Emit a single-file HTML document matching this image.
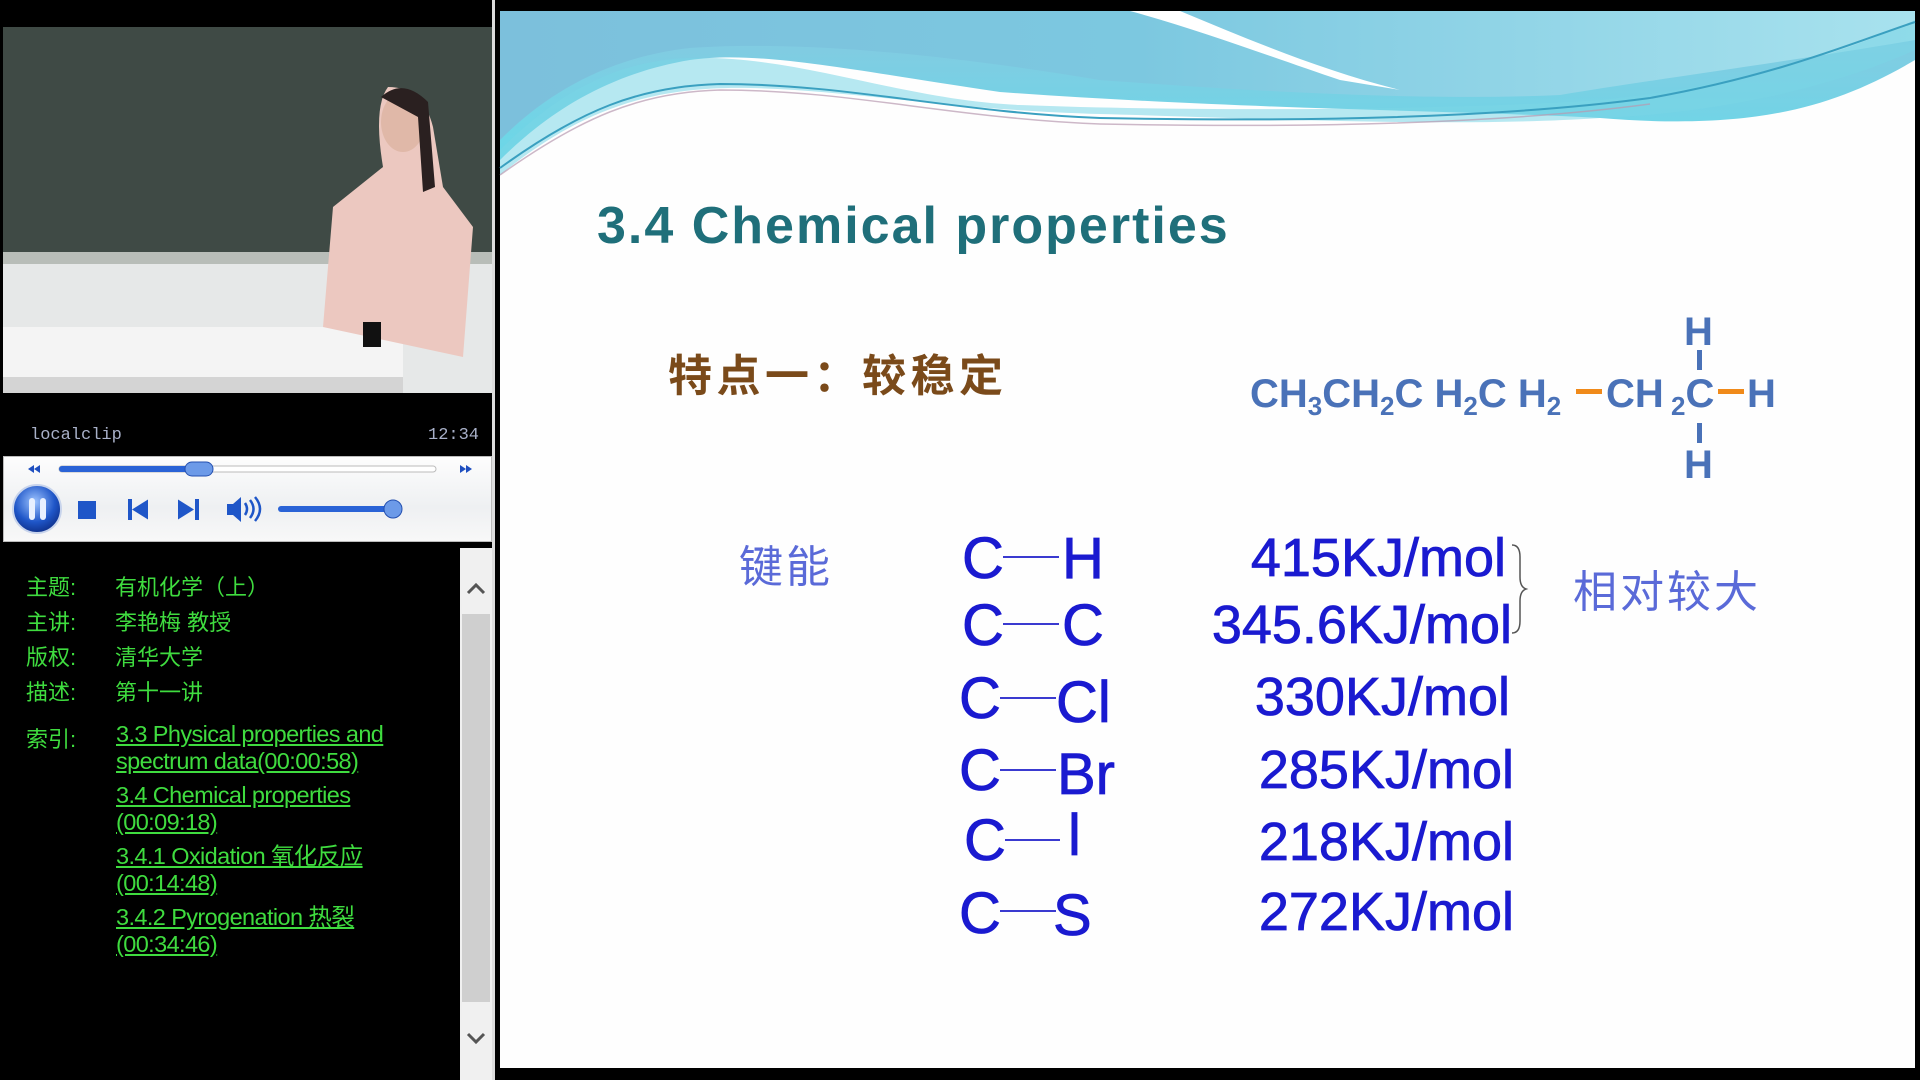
<!DOCTYPE html>
<html><head><meta charset="utf-8"><style>
*{margin:0;padding:0;box-sizing:border-box}
body{width:1920px;height:1080px;background:#000;position:relative;overflow:hidden;font-family:"Liberation Sans","Noto Sans CJK SC",sans-serif}
.abs{position:absolute}
.info{color:#3fdc3f;font-size:22px;font-family:"Liberation Sans","Noto Sans CJK SC",sans-serif}
.lnk{color:#3fdc3f;text-decoration:underline;font-size:23.5px;line-height:27px;letter-spacing:-0.6px;white-space:nowrap}
</style></head><body>
<!-- video -->
<svg class="abs" style="left:3px;top:27px" width="489" height="366" viewBox="0 0 489 366">
<rect width="489" height="366" fill="#3f4a45"/>
<rect y="225" width="489" height="12" fill="#b8bdb8"/>
<rect y="237" width="489" height="129" fill="#e6e8e8"/>
<rect y="300" width="400" height="50" fill="#f4f4f4"/>
<rect y="350" width="400" height="16" fill="#d4d4d4"/>
<path d="M385 60 Q370 80 380 140 L330 180 L320 300 L460 330 L470 200 L440 160 L430 100 Q420 60 385 60Z" fill="#ecc8c0"/>
<ellipse cx="400" cy="95" rx="22" ry="30" fill="#e0b8a8"/>
<path d="M378 70 Q400 50 425 75 L432 160 L420 165 L415 90 Z" fill="#2a2020"/>
<rect x="360" y="295" width="18" height="25" fill="#111"/>
</svg>
<!-- player -->
<div class="abs" style="left:30px;top:426px;color:#a8b0c8;font-family:'Liberation Mono',monospace;font-size:17px">localclip</div>
<div class="abs" style="left:428px;top:426px;color:#a8b0c8;font-family:'Liberation Mono',monospace;font-size:17px">12:34</div>
<div class="abs" style="left:3px;top:456px;width:489px;height:86px;background:linear-gradient(#fdfdfd,#eef0f2 60%,#f8f8f8);border:1px solid #bbb"></div>
<svg class="abs" style="left:0;top:456px" width="492" height="86">
<defs><radialGradient id="pb" cx="0.45" cy="0.35" r="0.7"><stop offset="0" stop-color="#9ec4ff"/><stop offset="0.6" stop-color="#1f56c8"/><stop offset="1" stop-color="#0c2a80"/></radialGradient></defs>
<path d="M28 13 l6 -4 v8z M34 13 l6 -4 v8z" fill="#1e4fc0"/>
<path d="M460 9 l6 4 -6 4z M466 9 l6 4 -6 4z" fill="#1e4fc0"/>
<rect x="59" y="10" width="377" height="6" rx="3" fill="#fff" stroke="#bbb"/>
<rect x="59" y="10" width="140" height="6" rx="3" fill="#2a63d6"/>
<rect x="185" y="6" width="28" height="14" rx="7" fill="#6c9ae8" stroke="#2450b0"/>
<circle cx="37" cy="53" r="24" fill="url(#pb)" stroke="#c8d4ec" stroke-width="2"/>
<rect x="29" y="42" width="6" height="22" rx="3" fill="#e8f0ff"/><rect x="40" y="42" width="6" height="22" rx="3" fill="#e8f0ff"/>
<rect x="78" y="45" width="18" height="18" fill="#1f56c8"/>
<rect x="128" y="43" width="4" height="21" fill="#1f56c8"/><path d="M132 53.5 l16 -10 v20z" fill="#1f56c8"/>
<path d="M178 43.5 l16 10 -16 10z" fill="#1f56c8"/><rect x="195" y="43" width="4" height="21" fill="#1f56c8"/>
<path d="M227 48 h6 l8 -7 v25 l-8 -7 h-6z" fill="#1f56c8"/>
<path d="M245 47 q4 6 0 12 M250 44 q7 9 0 18 M255 41 q10 12 0 24" stroke="#1f56c8" stroke-width="2.5" fill="none"/>
<rect x="278" y="50" width="116" height="6" rx="3" fill="#2a63d6"/>
<circle cx="393" cy="53" r="9" fill="#6c9ae8" stroke="#2450b0"/>
</svg>
<!-- info panel -->
<div class="abs" style="left:0;top:548px;width:460px;height:532px;background:#000"></div>
<div class="abs info" style="left:26px;top:570px;line-height:35px">主题:<br>主讲:<br>版权:<br>描述:</div>
<div class="abs info" style="left:115px;top:570px;line-height:35px">有机化学（上）<br>李艳梅 教授<br>清华大学<br>第十一讲</div>
<div class="abs info" style="left:26px;top:722px">索引:</div>
<div class="abs lnk" style="left:116px;top:721px">3.3 Physical properties and<br>spectrum data(00:00:58)</div>
<div class="abs lnk" style="left:116px;top:782px">3.4 Chemical properties<br>(00:09:18)</div>
<div class="abs lnk" style="left:116px;top:843px">3.4.1 Oxidation 氧化反应<br>(00:14:48)</div>
<div class="abs lnk" style="left:116px;top:904px">3.4.2 Pyrogenation 热裂<br>(00:34:46)</div>
<div class="abs" style="left:460px;top:548px;width:32px;height:532px;background:#f0f0f0"></div>
<div class="abs" style="left:462px;top:614px;width:28px;height:388px;background:#cfcfcf"></div>
<svg class="abs" style="left:460px;top:548px" width="32" height="532"><path d="M8 45 l8 -8 8 8" stroke="#555" stroke-width="3" fill="none"/><path d="M8 486 l8 8 8 -8" stroke="#555" stroke-width="3" fill="none"/></svg>
<div class="abs" style="left:492px;top:0;width:3px;height:1080px;background:#ddd"></div>
<!-- slide -->
<svg class="abs" style="left:0;top:0" width="1920" height="1080" viewBox="0 0 1920 1080">
<defs>
<linearGradient id="bl" x1="0" y1="0" x2="1" y2="0"><stop offset="0" stop-color="#7cc0dc"/><stop offset="0.45" stop-color="#7cc8e0"/><stop offset="1" stop-color="#a8e2ee"/></linearGradient>
<linearGradient id="cy" x1="0" y1="0" x2="0" y2="1"><stop offset="0" stop-color="#88c8e0"/><stop offset="1" stop-color="#6ad8e8"/></linearGradient>
</defs>
<rect x="500" y="11" width="1415" height="1057" fill="#fefefe"/>
<path d="M500 11 H1915 V60 C1830 110 1750 130 1600 118 C1450 110 1250 110 1000 92 C850 70 760 50 690 60 C600 75 540 120 500 160 Z" fill="url(#cy)"/>
<path d="M500 11 H1915 V40 C1800 60 1650 80 1560 95 C1450 100 1300 95 1100 80 C950 55 800 40 690 48 C600 58 540 100 500 140 Z" fill="url(#bl)"/>
<path d="M1130 11 C1200 30 1280 60 1340 80 L1400 90 C1320 70 1250 40 1180 11Z" fill="#fff"/>
<path d="M500 150 C560 90 620 60 690 58 C800 55 900 100 1020 105 C1200 112 1450 110 1600 100 C1750 85 1850 50 1915 20 V50 C1850 80 1740 112 1600 118 C1450 128 1250 118 1100 114 C950 110 850 90 750 88 C650 86 580 110 500 175Z" fill="#7ad6e6" opacity="0.55"/>
<path d="M500 168 C580 110 640 86 720 84 C850 84 950 112 1100 118 C1300 122 1500 118 1650 98 C1780 75 1860 40 1915 22" stroke="#3aa0c0" stroke-width="2" fill="none"/>
<path d="M500 175 C580 118 640 92 720 90 C850 90 950 118 1100 124 C1300 128 1500 124 1650 104" stroke="#b89ab0" stroke-width="1.5" fill="none" opacity="0.7"/>
<text x="597" y="243" font-family="Liberation Sans" font-weight="bold" font-size="52" letter-spacing="2" fill="#1f6f7a">3.4  Chemical properties</text>
<text x="668" y="391" font-family="Liberation Sans,Noto Sans CJK SC,sans-serif" font-weight="bold" font-size="44" letter-spacing="4.5" fill="#7a4a1a">特点一：较稳定</text>
<g font-family="Liberation Sans" font-weight="bold" font-size="40" fill="#4a72b8">
<text x="1250" y="407">CH<tspan font-size="26" dy="8">3</tspan><tspan dy="-8">CH</tspan><tspan font-size="26" dy="8">2</tspan><tspan dy="-8">C H</tspan><tspan font-size="26" dy="8">2</tspan><tspan dy="-8">C H</tspan><tspan font-size="26" dy="8">2</tspan></text>
<text x="1606" y="407">CH<tspan font-size="26" dy="8"> 2</tspan><tspan dy="-8">C</tspan></text>
<text x="1747" y="407">H</text>
<text x="1684" y="345">H</text>
<text x="1684" y="478">H</text>
</g>
<rect x="1576" y="389" width="26" height="5" fill="#f08a1a"/>
<rect x="1718" y="389" width="26" height="5" fill="#f08a1a"/>
<rect x="1697" y="350" width="5" height="20" fill="#4a72b8"/>
<rect x="1697" y="423" width="5" height="20" fill="#4a72b8"/>
<text x="739" y="582" font-family="Liberation Sans,Noto Sans CJK SC,sans-serif" font-size="44" letter-spacing="3" fill="#5a6ad8">键能</text>
<g font-family="Liberation Sans" font-size="58" fill="#1a1ad0" stroke="#1a1ad0" stroke-width="0.8">
<text x="962" y="578">C</text><text x="1062" y="578">H</text>
<text x="962" y="645">C</text><text x="1062" y="645">C</text>
<text x="959" y="718">C</text><text x="1056" y="722">Cl</text>
<text x="959" y="790">C</text><text x="1057" y="794">Br</text>
<text x="964" y="860">C</text><text x="1068" y="855">l</text>
<text x="959" y="933">C</text><text x="1053" y="935">S</text>
</g>
<g font-family="Liberation Sans" font-size="54" fill="#1a1ad0" stroke="#1a1ad0" stroke-width="0.8" text-anchor="end">
<text x="1506" y="576">415KJ/mol</text>
<text x="1512" y="643">345.6KJ/mol</text>
<text x="1510" y="715">330KJ/mol</text>
<text x="1514" y="788">285KJ/mol</text>
<text x="1514" y="860">218KJ/mol</text>
<text x="1514" y="930">272KJ/mol</text>
</g>
<g stroke="#3a3ad0" stroke-width="2">
<line x1="1003" y1="557" x2="1059" y2="557"/><line x1="1003" y1="624" x2="1059" y2="624"/>
<line x1="1000" y1="698" x2="1056" y2="698"/><line x1="1000" y1="770" x2="1056" y2="770"/>
<line x1="1005" y1="840" x2="1060" y2="840"/><line x1="1000" y1="911" x2="1056" y2="911"/>
</g>
<path d="M1512 545 q8 0 8 12 v20 q0 10 6 12 q-6 2 -6 12 v20 q0 12 -8 12" stroke="#555" stroke-width="1.5" fill="none"/>
<text x="1573" y="607" font-family="Liberation Sans,Noto Sans CJK SC,sans-serif" font-size="44" letter-spacing="3" fill="#5a6ad8">相对较大</text>
</svg>
</body></html>
